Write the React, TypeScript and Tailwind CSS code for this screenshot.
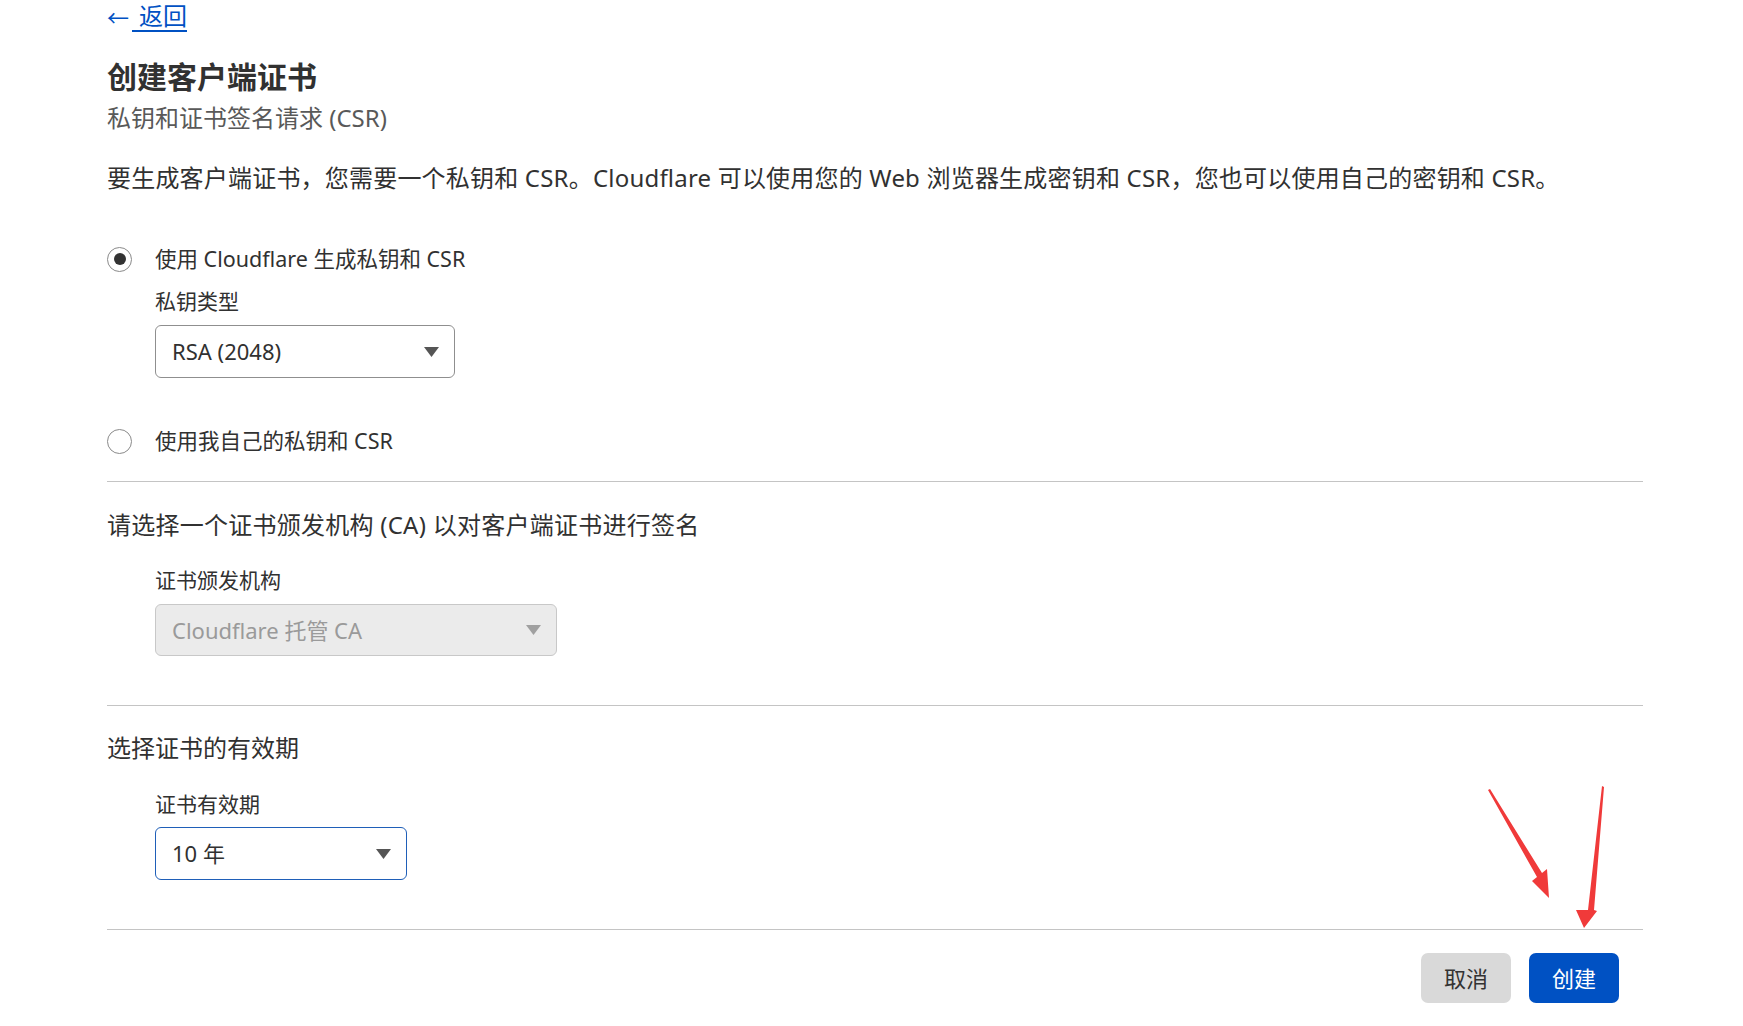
import React from "react";

const FONT = { fontFamily: '"Noto Sans", "Noto Sans CJK SC", sans-serif' };

function Caret({ color }: { color: string }) {
  return (
    <svg width="15" height="10" viewBox="0 0 15 10">
      <path d="M0 0 L15 0 L7.5 10 Z" fill={color} />
    </svg>
  );
}

function Radio({ checked, label }: { checked: boolean; label: string }) {
  return (
    <div className="flex h-[36px] items-center">
      <div className="flex h-[25px] w-[25px] items-center justify-center rounded-full border border-[#8a8a8a] bg-white">
        {checked && <div className="h-[12px] w-[12px] rounded-full bg-[#333333]" />}
      </div>
      <span className="ml-[23px] text-[21.5px] text-[#313131]">{label}</span>
    </div>
  );
}

export default function App() {
  return (
    <div className="relative min-h-[1026px] w-full bg-white text-[#313131]" style={FONT}>
      <div className="ml-[107px] w-[1536px]">
        {/* back */}
        <div className="flex h-[34px] items-center text-[24px] text-[#0051c3]">
          <span className="text-[22px] leading-none">←</span>
          <span className="ml-[3px] border-b-2 border-[#0051c3] pl-[7px] leading-[28px]">返回</span>
        </div>

        <div className="mt-[22px] flex h-[40px] items-center text-[30px] font-bold text-[#313131]">
          创建客户端证书
        </div>
        <div className="mt-[4px] flex h-[36px] items-center text-[24px] text-[#595959]">
          私钥和证书签名请求 (CSR)
        </div>
        <div className="mt-[24px] flex h-[36px] items-center text-[24px] tracking-[0.2px] text-[#313131]">
          要生成客户端证书，您需要一个私钥和 CSR。Cloudflare 可以使用您的 Web 浏览器生成密钥和 CSR，您也可以使用自己的密钥和 CSR。
        </div>

        <div className="mt-[45px]">
          <Radio checked label="使用 Cloudflare 生成私钥和 CSR" />
        </div>
        <div className="pl-[48px]">
          <div className="mt-[10px] flex h-[30px] items-center text-[21px] text-[#313131]">私钥类型</div>
          <div className="mt-[8px] flex h-[53px] w-[300px] items-center justify-between rounded-[6px] border border-[#8f8f8f] bg-white pl-[16px] pr-[15px] text-[22px] text-[#313131]">
            <span>RSA (2048)</span>
            <Caret color="#555555" />
          </div>
        </div>
        <div className="mt-[45px]">
          <Radio checked={false} label="使用我自己的私钥和 CSR" />
        </div>

        <div className="mt-[22px] h-px bg-[#c4c4c4]" />

        <div className="mt-[25px] flex h-[36px] items-center text-[24px] tracking-[0.25px] text-[#313131]">
          请选择一个证书颁发机构 (CA) 以对客户端证书进行签名
        </div>
        <div className="pl-[48px]">
          <div className="mt-[23px] flex h-[30px] items-center text-[21px] text-[#313131]">证书颁发机构</div>
          <div className="mt-[8px] flex h-[52px] w-[402px] items-center justify-between rounded-[6px] border border-[#c8c8c8] bg-[#ebebeb] pl-[16px] pr-[15px] text-[22px] text-[#9a9a9a]">
            <span>Cloudflare 托管 CA</span>
            <Caret color="#a0a0a0" />
          </div>
        </div>

        <div className="mt-[49px] h-px bg-[#c4c4c4]" />

        <div className="mt-[24px] flex h-[36px] items-center text-[24px] text-[#313131]">
          选择证书的有效期
        </div>
        <div className="pl-[48px]">
          <div className="mt-[24px] flex h-[30px] items-center text-[21px] text-[#313131]">证书有效期</div>
          <div className="mt-[7px] flex h-[53px] w-[252px] items-center justify-between rounded-[6px] border border-[#1f5fb8] bg-white pl-[16px] pr-[15px] text-[22px] text-[#313131]">
            <span>10 年</span>
            <Caret color="#555555" />
          </div>
        </div>

        <div className="mt-[49px] h-px bg-[#c4c4c4]" />

        <div className="mt-[23px] flex justify-end gap-[18px] pr-[24px]">
          <button className="flex h-[50px] w-[90px] items-center justify-center rounded-[7px] bg-[#d9d9d9] text-[22px] text-[#333333]">
            取消
          </button>
          <button className="flex h-[50px] w-[90px] items-center justify-center rounded-[7px] bg-[#0051c3] text-[22px] text-white">
            创建
          </button>
        </div>
      </div>

      {/* annotation arrows */}
      <svg className="pointer-events-none absolute left-0 top-0" width="1743" height="1026">
        <g fill="#f03a3a">
          <path d="M1488 790 L1490 789 L1542 873 L1547 869 L1549 898 L1532 881 L1537 877 Z" />
          <path d="M1602 786 L1604 787 L1594 910 L1597 911 L1584 928 L1576 910 L1588 910 Z" />
        </g>
      </svg>
    </div>
  );
}
